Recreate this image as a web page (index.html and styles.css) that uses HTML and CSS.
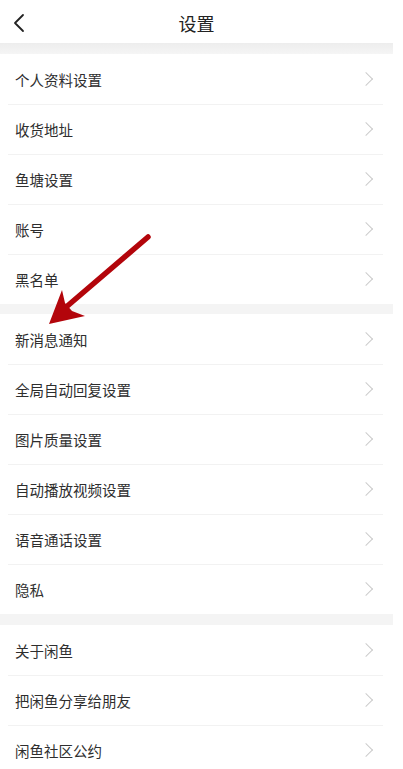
FILE: index.html
```html
<!DOCTYPE html>
<html lang="zh">
<head>
<meta charset="utf-8">
<link rel="stylesheet" href="styles.css">
</head>
<body>
<div class="page">
  <header class="nav">
    <svg class="back" width="12" height="20" viewBox="0 0 12 20"><path d="M10 2 L2 10 L10 18" fill="none" stroke="#222" stroke-width="1.8" stroke-linecap="round" stroke-linejoin="round"/></svg>
    <div class="title">设置</div>
  </header>
  <div class="gap gap-top"></div>
  <ul class="group">
    <li class="row"><span>个人资料设置</span><i class="chev"></i></li>
    <li class="row"><span>收货地址</span><i class="chev"></i></li>
    <li class="row"><span>鱼塘设置</span><i class="chev"></i></li>
    <li class="row"><span>账号</span><i class="chev"></i></li>
    <li class="row"><span>黑名单</span><i class="chev"></i></li>
  </ul>
  <div class="gap"></div>
  <ul class="group">
    <li class="row"><span>新消息通知</span><i class="chev"></i></li>
    <li class="row"><span>全局自动回复设置</span><i class="chev"></i></li>
    <li class="row"><span>图片质量设置</span><i class="chev"></i></li>
    <li class="row"><span>自动播放视频设置</span><i class="chev"></i></li>
    <li class="row"><span>语音通话设置</span><i class="chev"></i></li>
    <li class="row"><span>隐私</span><i class="chev"></i></li>
  </ul>
  <div class="gap gap-3"></div>
  <ul class="group">
    <li class="row"><span>关于闲鱼</span><i class="chev"></i></li>
    <li class="row"><span>把闲鱼分享给朋友</span><i class="chev"></i></li>
    <li class="row"><span>闲鱼社区公约</span><i class="chev"></i></li>
  </ul>
  <svg class="arrow" width="403" height="769" viewBox="0 0 403 769">
    <line x1="148" y1="237" x2="58" y2="314" stroke="#b3050b" stroke-width="5.5" stroke-linecap="round"/>
    <path d="M49 324 L62 290 L65 303 L72 311 L85 316 Z" fill="#b3050b"/>
  </svg>
</div>
</body>
</html>
```
FILE: styles.css
```css
html, body {
  margin: 0;
  padding: 0;
  background: #fff;
}
.page {
  position: relative;
  width: 393px;
  height: 769px;
  overflow: hidden;
  font-family: "Noto Sans CJK SC", "Noto Sans", sans-serif;
  color: #2e2e2e;
}
.nav {
  height: 43px;
  display: flex;
  align-items: center;
  justify-content: center;
  position: relative;
  background: #fff;
}
.back {
  position: absolute;
  left: 13px;
  top: 13px;
}
.title {
  font-size: 18px;
  color: #222;
  line-height: 1;
  margin-top: 2px;
}
.gap {
  height: 10px;
  background: #f4f4f4;
}
.gap-top {
  height: 11px;
  background: linear-gradient(#ededed, #f5f5f5);
}
.gap-3 {
  height: 11px;
}
.group {
  list-style: none;
  margin: 0;
  padding: 0;
}
.row {
  height: 50px;
  display: flex;
  align-items: center;
  justify-content: space-between;
  padding: 0 18px 0 15px;
  font-size: 14.5px;
  position: relative;
}
.row + .row::before {
  content: "";
  position: absolute;
  left: 8px;
  right: 10px;
  top: 0;
  height: 1px;
  background: #f2f2f2;
}
.chev {
  width: 9px;
  height: 9px;
  border-top: 1.5px solid #cccccc;
  border-right: 1.5px solid #cccccc;
  transform: rotate(45deg);
  margin-right: 4px;
}
.arrow {
  position: absolute;
  left: 0;
  top: 0;
  pointer-events: none;
}
```
